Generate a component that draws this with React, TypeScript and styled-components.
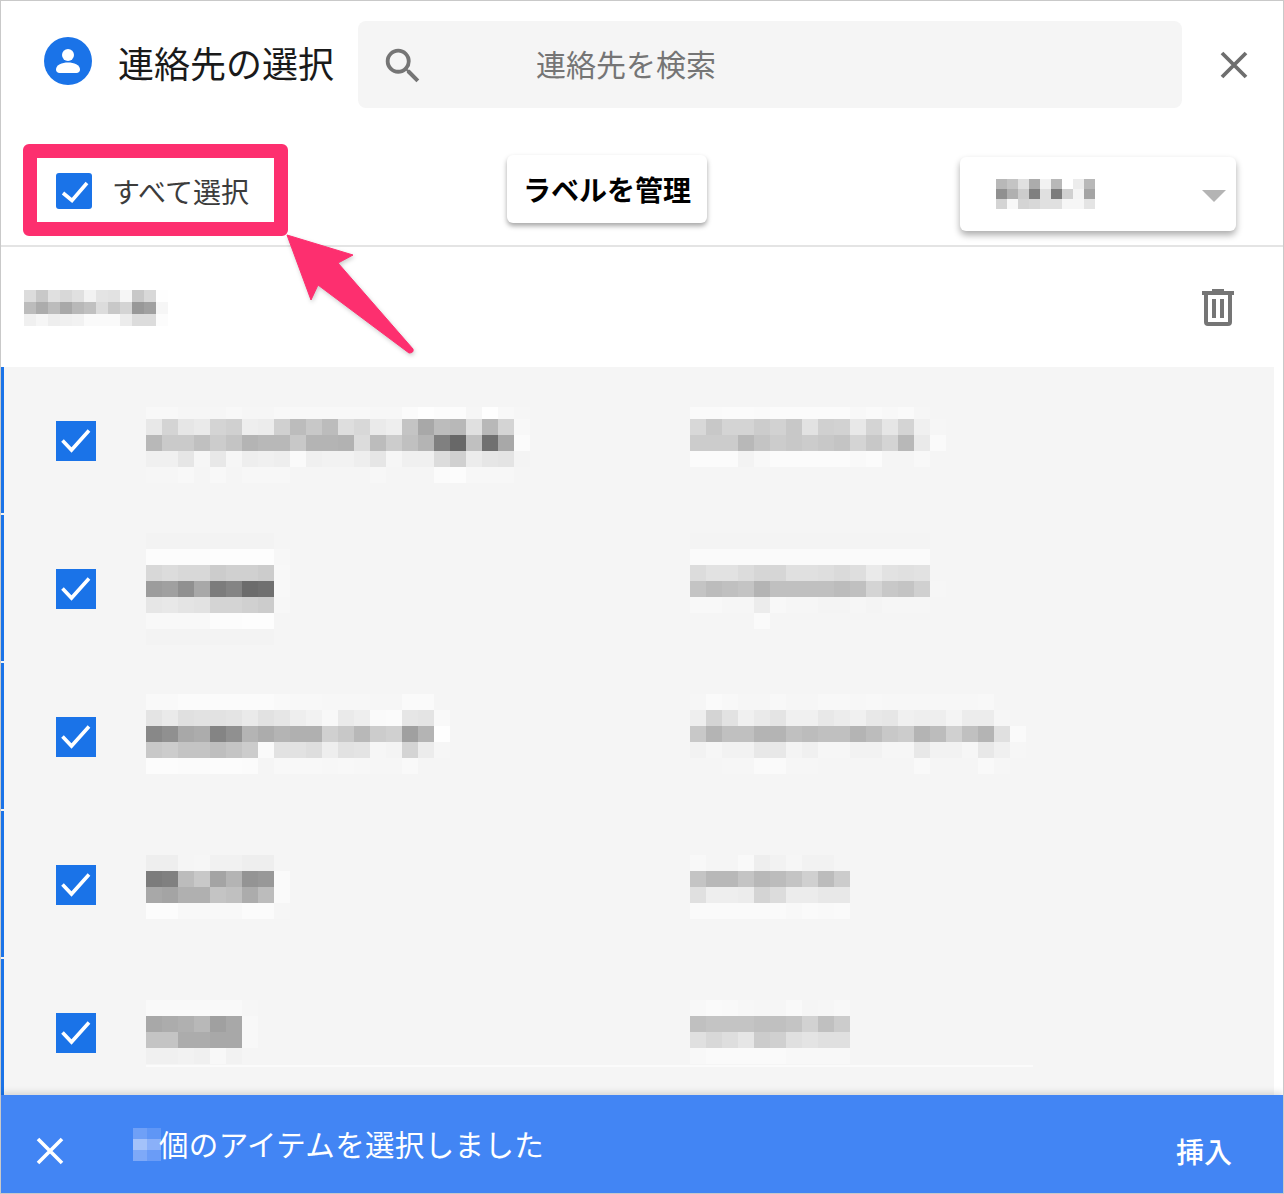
import React from "react";
import styled, { createGlobalStyle } from "styled-components";

const GlobalStyle = createGlobalStyle`
  html, body {
    margin: 0;
    background: #ffffff;
    font-family: "Noto Sans CJK JP", "Noto Sans", sans-serif;
  }
`;

const Frame = styled.div`
  box-sizing: border-box;
  width: 1284px;
  height: 1194px;
  border: 1px solid #c9c9c9;
  background: #ffffff;
  position: relative;
  overflow: hidden;
  display: flex;
  flex-direction: column;
`;

const Header = styled.header`
  display: flex;
  align-items: center;
  height: 87px;
  margin-top: 20px;
  padding-left: 43px;
  flex: none;
`;

const Avatar = styled.svg`
  margin-bottom: 8px;
  flex: none;
`;

const Title = styled.h1`
  margin: 0 0 5px 26px;
  width: 240px;
  font-size: 36px;
  line-height: 48px;
  font-weight: 400;
  color: #1a1a1a;
  white-space: nowrap;
`;

const SearchBox = styled.div`
  display: flex;
  align-items: center;
  box-sizing: border-box;
  width: 824px;
  height: 87px;
  padding-left: 22px;
  border-radius: 8px;
  background: #f5f5f5;
`;

const SearchIcon = styled.svg`
  margin-top: 3px;
  flex: none;
`;

const SearchPlaceholder = styled.span`
  margin: 0 0 4px 110px;
  font-size: 30px;
  color: #757575;
`;

const CloseButton = styled.button`
  display: flex;
  margin: 0 0 0 38px;
  padding: 0;
  border: 0;
  background: none;
`;

const Toolbar = styled.div`
  display: flex;
  align-items: flex-start;
  flex: none;
  height: 139px;
  padding-left: 22px;
  border-bottom: 2px solid #e4e4e4;
  box-sizing: border-box;
`;

const SelectAll = styled.div`
  display: flex;
  align-items: center;
  gap: 20px;
  box-sizing: border-box;
  width: 265px;
  height: 92px;
  margin-top: 36px;
  padding: 2px 0 0 19px;
  border: 14px solid #fd2f6f;
  border-radius: 6px;
  flex: none;
`;

const SelectAllLabel = styled.span`
  font-size: 28px;
  color: #3c3c3c;
  white-space: nowrap;
`;

const SmallCheck = styled.span`
  display: flex;
  width: 36px;
  height: 36px;
  border-radius: 3px;
  background: #1a73e8;
  flex: none;
`;

const RowCheck = styled.span`
  display: flex;
  width: 40px;
  height: 40px;
  margin-top: 54px;
  background: #1a73e8;
`;

const ManageButton = styled.button`
  width: 200px;
  height: 68px;
  margin: 47px 0 0 219px;
  padding: 0;
  border: 0;
  border-radius: 6px;
  background: #ffffff;
  box-shadow: 0 3px 5px rgba(0, 0, 0, 0.35);
  font-family: inherit;
  font-size: 28px;
  font-weight: 700;
  color: #000000;
  white-space: nowrap;
  flex: none;
`;

const LabelSelect = styled.div`
  display: flex;
  align-items: center;
  justify-content: space-between;
  box-sizing: border-box;
  width: 276px;
  height: 74px;
  margin: 49px 0 0 253px;
  padding: 0 10px 0 36px;
  border-radius: 6px;
  background: #ffffff;
  box-shadow: 0 4px 7px rgba(0, 0, 0, 0.33);
  flex: none;
`;

const Caret = styled.span`
  width: 0;
  height: 0;
  border-left: 12px solid transparent;
  border-right: 12px solid transparent;
  border-top: 12px solid #b4b4b4;
  margin-top: 3px;
`;

const LabelRow = styled.div`
  display: flex;
  align-items: center;
  justify-content: space-between;
  flex: none;
  height: 120px;
  padding: 0 49px 0 23px;
`;

const List = styled.div`
  display: flex;
  flex-direction: column;
  gap: 2px;
  flex: none;
  height: 728px;
  margin-right: 9px;
  background: #f5f5f5;
  overflow: hidden;
`;

const Row = styled.div`
  position: relative;
  display: grid;
  grid-template-columns: 40px 494px auto;
  column-gap: 50px;
  align-items: start;
  flex: none;
  height: 146px;
  padding-left: 52px;
  border-left: 3px solid #1a73e8;
`;

const RowRule = styled.span`
  position: absolute;
  left: 142px;
  top: 106px;
  width: 887px;
  height: 2px;
  background: #fbfbfb;
`;

const Footer = styled.footer`
  position: relative;
  display: flex;
  align-items: center;
  flex: 1;
  padding: 0 51px 0 35px;
  background: #4285f4;
  box-shadow: 0 -3px 6px rgba(0, 0, 0, 0.12);
  color: #ffffff;
`;

const FooterClose = styled.button`
  display: flex;
  margin: 14px 69px 0 0;
  padding: 0;
  border: 0;
  background: none;
`;

const FooterText = styled.span`
  margin: 0 0 3px -2px;
  font-size: 29.5px;
  letter-spacing: 0.35px;
  white-space: nowrap;
`;

const InsertButton = styled.button`
  margin: 14px 0 0 auto;
  padding: 0;
  border: 0;
  background: none;
  font-family: inherit;
  font-size: 28px;
  font-weight: 500;
  color: #ffffff;
`;

const MosaicSvg = styled.svg<{ $top: number }>`
  display: block;
  margin-top: ${(p) => p.$top}px;
  flex: none;
`;

const ArrowSvg = styled.svg`
  position: absolute;
  left: 280px;
  top: 228px;
  filter: drop-shadow(1px 2px 2px rgba(0, 0, 0, 0.2));
`;

const shade = (v: string) => (v.length === 2 ? `#${v}${v}${v}` : `#${v}`);

const Mosaic = ({
  rows,
  top = 0,
  cellW = 16,
  cellH = 16,
  firstH,
}: {
  rows: string[];
  top?: number;
  cellW?: number;
  cellH?: number;
  firstH?: number;
}) => {
  const grid = rows.map((r) => r.split(" "));
  const first = firstH ?? cellH;
  const width = Math.max(...grid.map((r) => r.length)) * cellW;
  const height = first + (grid.length - 1) * cellH;
  return (
    <MosaicSvg $top={top} width={width} height={height} shapeRendering="crispEdges">
      {grid.map((cells, y) =>
        cells.map((c, x) => (
          <rect
            key={`${x}-${y}`}
            x={x * cellW}
            y={y === 0 ? 0 : first + (y - 1) * cellH}
            width={cellW}
            height={y === 0 ? first : cellH}
            fill={shade(c)}
          />
        ))
      )}
    </MosaicSvg>
  );
};

const Tick = ({ size, small }: { size: number; small?: boolean }) => (
  <svg width={size} height={size} viewBox={`0 0 ${size} ${size}`}>
    <path
      d={small ? "M7 20l9 7.5L31 10" : "M6.5 19.5l9 9.5L33 9.5"}
      fill="none"
      stroke="#ffffff"
      strokeWidth="3.6"
    />
  </svg>
);

const Cross = ({ color, width }: { color: string; width: number }) => (
  <svg width="28" height="28" viewBox="0 0 28 28">
    <path d="M2 2l24 24M26 2L2 26" fill="none" stroke={color} strokeWidth={width} />
  </svg>
);

const contacts = [
  {
    left: {
      top: 40,
      firstH: 12,
      rows: [
        "f8 f8 f6 f6 f6 f8 f6 f6 f8 f8 f8 f8 f8 f8 f7 f7 fb fe fc fc f6 fe f8 f6",
        "e8 d4 e6 ea d4 d0 ee ec d0 bc c8 bc de d8 ea ee c4 a8 bc b8 e0 b8 d4 f8",
        "b8 ca ca c0 cc c4 b4 b8 b8 c8 b4 b4 b2 dc bc cc c0 b4 80 68 c0 70 a8 fb",
        "f0 f0 e6 f6 e8 f6 ee f0 ee fa f0 f2 f2 ee e6 f6 f0 f0 dc d0 ec e6 e4 f4",
        "f6 f6 f8 f5 f8 f5 f7 f7 f7 f5 f5 f5 f5 f5 f7 f5 f5 f5 fb fc f7 f7 f7 f5",
      ],
    },
    right: {
      top: 40,
      firstH: 12,
      rows: [
        "fa fa fb fb fa fb fb fb fb fb f8 fa f8 fa f6",
        "d8 c8 d4 d4 cc d2 c8 e2 d0 d2 e8 d4 e6 d4 f0 f6",
        "cc cc cc b8 c4 cc c8 cc c8 c4 d4 c8 d4 b8 ea fa",
        "fb fb fb f3 f8 fb fb fb fb fb f9 fb f5 f5 f8 f5",
      ],
    },
  },
  {
    left: {
      top: 18,
      rows: [
        "f3 f3 f3 f3 f3 f3 f3 f3 f5",
        "fc fc fc fc fd fd fd fd f7",
        "d8 dc d8 d8 cc d0 d0 cc f8",
        "9c a0 90 a8 7c 84 6c 70 f8",
        "e6 e8 e4 e2 d4 d4 d0 cc f7",
        "f8 f8 f8 f8 fc fc fd fd f5",
        "f3 f3 f3 f3 f3 f3 f3 f3 f5",
      ],
    },
    right: {
      top: 18,
      rows: [
        "f4 f4 f4 f4 f4 f4 f4 f4 f4 f4 f4 f4 f4 f4 f4",
        "fa fa fa fa fa fa fa fa fa fa fa fa fa fa fa",
        "dc e2 e2 dc d6 d6 e0 e0 de da de ea e2 e0 e2",
        "c4 bc c0 c4 b4 c0 c0 c0 c0 bc c0 d4 c8 c4 d0 f6",
        "f8 f8 f6 f6 ec f8 f6 f6 f4 f4 f6 f4 f6 f6 f6",
        "f5 f5 f5 f5 fa f5 f5 f5 f5 f5 f5 f5 f5 f5 f5",
      ],
    },
  },
  {
    left: {
      top: 31,
      rows: [
        "f9 f9 fb fb fb fb fb fb f9 f8 f8 f7 f7 f7 f6 f6 fa fa f5",
        "e4 ea e0 e2 e2 e4 ea e2 e6 ee f2 f8 ea ee fa fb e6 e4 f9",
        "88 90 a8 ac 84 90 b4 ac b4 b0 b0 d0 c8 b8 cc d0 a0 b4 fe",
        "c8 cc c4 c4 be c4 cc fa e2 e2 de ee e2 e4 f6 f4 d4 ec f6",
        "fc fc fb fb fc fc fb f5 f8 f8 f8 f7 f8 f7 f6 f6 f9 f5 f5",
      ],
    },
    right: {
      top: 31,
      rows: [
        "f6 fa f8 f6 f6 f8 f6 f6 f8 f8 f7 f8 f7 f7 f7 f7 f7 f7 f8 f5",
        "ee d4 e2 f0 ea e4 f0 f0 e8 ec f0 e8 e6 f0 ee ee f4 ec ec f6",
        "c8 b4 c0 c0 b4 b4 c0 bc c0 c0 b4 bc c8 cc b4 bc d0 c0 b4 e0 fa",
        "f2 f6 f2 f2 e8 e8 f4 f0 f6 f6 f2 f2 f6 f6 e8 f2 f2 f6 e8 f0 f6",
        "f5 f5 f6 f6 fa fa f6 f6 f5 f5 f5 f5 f5 f5 f9 f5 f5 f5 f9 f6",
      ],
    },
  },
  {
    left: {
      top: 44,
      rows: [
        "ee ee f5 f6 f1 f1 ee ee f5",
        "7c 80 bc c8 a4 b4 94 98 fa",
        "a8 a4 b0 b0 c4 c0 ac bc fa",
        "fc fc f8 f8 f8 f8 fb fb f6",
      ],
    },
    right: {
      top: 44,
      rows: [
        "f8 f5 f5 f9 ee f2 f6 f2 f2 f5",
        "c4 b8 b8 c4 b8 bc c4 d0 bc cc",
        "e0 ee ee ec d4 dc ec ec e8 e8",
        "fa fa fa fa fa fa f8 fa f9 fa",
      ],
    },
  },
  {
    left: {
      top: 41,
      rows: [
        "f9 f9 f9 f9 f9 f9 f6",
        "a8 ac b0 b8 a0 a8 f8",
        "c4 c4 ac ac a8 a8 f8",
        "f0 f0 f2 f0 f8 f2 f5",
      ],
    },
    right: {
      top: 41,
      rows: [
        "f8 fa f9 f7 f6 f6 f9 f5 f6 f8",
        "c0 c4 c4 c4 c0 c0 c4 d2 c0 cc",
        "e0 d8 de e6 cc d0 e0 e4 e0 e0",
        "f8 fa fa fa fa fa f8 f8 f8 f8",
      ],
    },
  },
];

export default function App() {
  return (
    <>
      <GlobalStyle />
      <Frame>
        <Header>
          <Avatar width="48" height="48" viewBox="0 0 48 48">
            <circle cx="24" cy="24" r="24" fill="#1a73e8" />
            <circle cx="24" cy="18" r="6" fill="#ffffff" />
            <path
              d="M12 32.5c0-4.500 6-7 12-7s12 2.500 12 7c0 2-1.500 3.500-3.500 3.500h-17c-2 0-3.500-1.500-3.500-3.500z"
              fill="#ffffff"
            />
          </Avatar>
          <Title>連絡先の選択</Title>
          <SearchBox>
            <SearchIcon width="46" height="46" viewBox="0 0 24 24">
              <path
                fill="#757575"
                d="M15.500 14h-.79l-.28-.27A6.471 6.471 0 0 0 16 9.500 6.500 6.500 0 1 0 9.500 16c1.610 0 3.090-.59 4.230-1.570l.27.28v.79l5 4.990L20.490 19l-4.990-5zm-6 0C7.010 14 5 11.990 5 9.500S7.010 5 9.500 5 14 7.010 14 9.500 11.990 14 9.500 14z"
              />
            </SearchIcon>
            <SearchPlaceholder>連絡先を検索</SearchPlaceholder>
          </SearchBox>
          <CloseButton>
            <Cross color="#6e6e6e" width={3.8} />
          </CloseButton>
        </Header>

        <Toolbar>
          <SelectAll>
            <SmallCheck>
              <Tick size={36} small />
            </SmallCheck>
            <SelectAllLabel>すべて選択</SelectAllLabel>
          </SelectAll>
          <ManageButton>ラベルを管理</ManageButton>
          <LabelSelect>
            <Mosaic
              cellW={11}
              cellH={10}
              rows={[
                "b8 c4 e0 ac f2 b8 ff ec b8",
                "90 b0 cc 80 e0 7c d0 f4 a4",
                "d4 f8 d4 d8 e0 e0 f6 f6 e4",
              ]}
            />
            <Caret />
          </LabelSelect>
        </Toolbar>

        <LabelRow>
          <Mosaic
            top={2}
            cellW={12}
            cellH={12}
            rows={[
              "dc c8 e0 d8 e0 f2 e4 e2 f6 c8 d8 fe",
              "bc ac bc a8 b8 c0 dc c8 d4 98 a0 f6",
              "f0 f6 ee f0 f2 fa fa fa ec dc dc fc",
            ]}
          />
          <svg width="32" height="37" viewBox="0 0 32 37">
            <path d="M10 0h12v2h10v4H0V2h10z" fill="#757575" />
            <path
              d="M4 6v27a2 2 0 0 0 2 2h20a2 2 0 0 0 2-2V6"
              fill="none"
              stroke="#757575"
              strokeWidth="4"
            />
            <path d="M10 10h4v19h-4zM18 10h4v19h-4z" fill="#757575" />
          </svg>
        </LabelRow>

        <List>
          {contacts.map((c, i) => (
            <Row key={i}>
              <RowCheck>
                <Tick size={40} />
              </RowCheck>
              <Mosaic {...c.left} />
              <Mosaic {...c.right} />
              {i === contacts.length - 1 && <RowRule />}
            </Row>
          ))}
        </List>

        <Footer>
          <FooterClose>
            <Cross color="#ffffff" width={3.6} />
          </FooterClose>
          <Mosaic
            cellW={14}
            cellH={11}
            rows={["6fa0f7 5f96f6", "a4c2fa 8ab0f9", "7ea9f8 6a9cf7"]}
          />
          <FooterText>個のアイテムを選択しました</FooterText>
          <InsertButton>挿入</InsertButton>
        </Footer>

        <ArrowSvg width="140" height="130" viewBox="0 0 140 130">
          <path
            d="M6 6L72 26L57 34L132 120Q133 124 128 124L37 56L30 71z"
            fill="#fd2f6f"
            stroke="#fd2f6f"
            strokeLinejoin="round"
          />
        </ArrowSvg>
      </Frame>
    </>
  );
}
